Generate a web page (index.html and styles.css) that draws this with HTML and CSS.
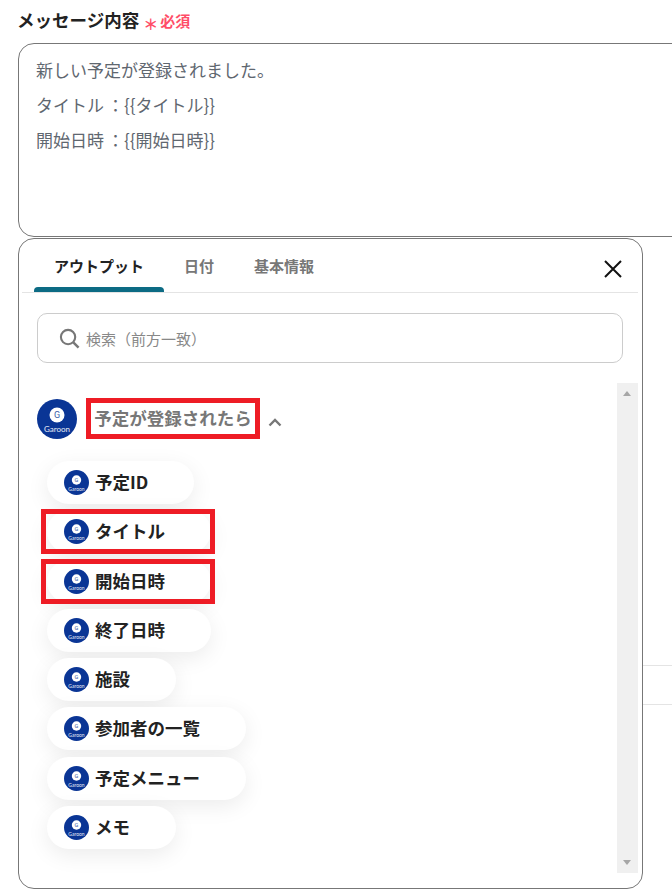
FILE: index.html
```html
<!DOCTYPE html>
<html lang="ja">
<head>
<meta charset="utf-8">
<title>メッセージ内容</title>
<link rel="stylesheet" href="styles.css">
</head>
<body>
<main class="page">
  <div class="field-label">
    <span class="label-text">メッセージ内容</span>
    <span class="asterisk">＊</span>
    <span class="required">必須</span>
  </div>
  <div class="message">
    <p>新しい予定が登録されました。</p>
    <p>タイトル<span class="colon">：</span>{{タイトル}}</p>
    <p>開始日時<span class="colon">：</span>{{開始日時}}</p>
  </div>
  <div class="behind">
    <div class="behind-row"></div>
  </div>

  <section class="panel">
    <header class="tabs">
      <div class="tab tab-active">アウトプット</div>
      <div class="tab tab-date">日付</div>
      <div class="tab tab-info">基本情報</div>
      <svg class="close" width="18" height="18" viewBox="0 0 18 18"><path d="M1 1 17 17M17 1 1 17" stroke="#111" stroke-width="2" fill="none"/></svg>
    </header>
    <div class="search">
      <svg class="search-icon" width="21" height="21" viewBox="0 0 22 22"><circle cx="9.5" cy="9.5" r="7.5" stroke="#777" stroke-width="2.2" fill="none"/><path d="M15 15 20.5 20.5" stroke="#777" stroke-width="2.6" fill="none"/></svg>
      <span class="search-text">検索（前方一致）</span>
    </div>
    <div class="scroll-area">
      <div class="list">
        <div class="group-head">
          <svg class="group-logo" viewBox="0 0 40 40"><circle cx="20" cy="20" r="20" class="lg-bg"/><circle cx="20" cy="16" r="7.5" class="lg-dot"/><text x="20" y="19.2" class="lg-g">G</text><text x="20" y="33" class="lg-name">Garoon</text></svg>
          <div class="group-title">予定が登録されたら</div>
          <svg class="chevron" width="14" height="9" viewBox="0 0 14 9"><path d="M1.5 7.5 7 2l5.5 5.5" stroke="#777" stroke-width="2.4" fill="none"/></svg>
        </div>
        <ul class="chips">
          <li class="chip"><svg class="chip-logo" viewBox="0 0 40 40"><circle cx="20" cy="20" r="20" class="lg-bg"/><circle cx="20" cy="16" r="7.5" class="lg-dot"/><text x="20" y="19.2" class="lg-g">G</text><text x="20" y="33" class="lg-name">Garoon</text></svg>予定ID</li>
          <li class="chip marked"><svg class="chip-logo" viewBox="0 0 40 40"><circle cx="20" cy="20" r="20" class="lg-bg"/><circle cx="20" cy="16" r="7.5" class="lg-dot"/><text x="20" y="19.2" class="lg-g">G</text><text x="20" y="33" class="lg-name">Garoon</text></svg>タイトル</li>
          <li class="chip marked"><svg class="chip-logo" viewBox="0 0 40 40"><circle cx="20" cy="20" r="20" class="lg-bg"/><circle cx="20" cy="16" r="7.5" class="lg-dot"/><text x="20" y="19.2" class="lg-g">G</text><text x="20" y="33" class="lg-name">Garoon</text></svg>開始日時</li>
          <li class="chip"><svg class="chip-logo" viewBox="0 0 40 40"><circle cx="20" cy="20" r="20" class="lg-bg"/><circle cx="20" cy="16" r="7.5" class="lg-dot"/><text x="20" y="19.2" class="lg-g">G</text><text x="20" y="33" class="lg-name">Garoon</text></svg>終了日時</li>
          <li class="chip"><svg class="chip-logo" viewBox="0 0 40 40"><circle cx="20" cy="20" r="20" class="lg-bg"/><circle cx="20" cy="16" r="7.5" class="lg-dot"/><text x="20" y="19.2" class="lg-g">G</text><text x="20" y="33" class="lg-name">Garoon</text></svg>施設</li>
          <li class="chip"><svg class="chip-logo" viewBox="0 0 40 40"><circle cx="20" cy="20" r="20" class="lg-bg"/><circle cx="20" cy="16" r="7.5" class="lg-dot"/><text x="20" y="19.2" class="lg-g">G</text><text x="20" y="33" class="lg-name">Garoon</text></svg>参加者の一覧</li>
          <li class="chip"><svg class="chip-logo" viewBox="0 0 40 40"><circle cx="20" cy="20" r="20" class="lg-bg"/><circle cx="20" cy="16" r="7.5" class="lg-dot"/><text x="20" y="19.2" class="lg-g">G</text><text x="20" y="33" class="lg-name">Garoon</text></svg>予定メニュー</li>
          <li class="chip"><svg class="chip-logo" viewBox="0 0 40 40"><circle cx="20" cy="20" r="20" class="lg-bg"/><circle cx="20" cy="16" r="7.5" class="lg-dot"/><text x="20" y="19.2" class="lg-g">G</text><text x="20" y="33" class="lg-name">Garoon</text></svg>メモ</li>
        </ul>
      </div>
      <div class="scrollbar">
        <span class="arrow arrow-up"></span>
        <span class="arrow arrow-down"></span>
      </div>
    </div>
  </section>
</main>
</body>
</html>
```
FILE: styles.css
```css
* { box-sizing: border-box; }
html, body { margin: 0; padding: 0; }
body {
  background: #fff;
  font-family: "Noto Sans CJK JP", "Noto Sans", sans-serif;
  color: #222;
  overflow: hidden;
}
.lg-bg { fill: #0a3595; }
.lg-dot { fill: #fff; }
.lg-g {
  font-family: Roboto, sans-serif;
  font-size: 9px;
  font-weight: 400;
  text-anchor: middle;
  fill: #3a5caa;
}
.lg-name {
  font-family: Lato, sans-serif;
  font-size: 8px;
  font-weight: 400;
  text-anchor: middle;
  fill: #e8ecf6;
}
.page {
  position: relative;
  width: 672px;
  height: 893px;
  overflow: hidden;
  padding: 8px 0 0 18px;
}
.field-label {
  display: flex;
  align-items: flex-start;
  height: 24px;
}
.label-text {
  margin-left: -1px;
  font-size: 17.5px;
  font-weight: 700;
  line-height: 23px;
  color: #222;
}
.asterisk {
  margin: 7px 0 0 4px;
  font-size: 15px;
  line-height: 18px;
  font-weight: 700;
  color: #ff4d67;
}
.required {
  margin-left: 2px;
  font-size: 15px;
  font-weight: 700;
  line-height: 25px;
  color: #ff4d67;
}
.message {
  margin-top: 11px;
  width: 700px;
  height: 194px;
  border: 1px solid #777;
  border-radius: 16px;
  padding: 8px 17px;
  font-size: 17px;
  color: #5f6770;
}
.message p {
  margin: 0;
  height: 35px;
  line-height: 35px;
}
.colon { margin-left: 3px; }
.behind { margin-top: 428px; margin-left: 625px; }
.behind-row {
  height: 40px;
  border-top: 1px solid #e4e4e4;
  border-bottom: 1px solid #e4e4e4;
}
.panel {
  position: absolute;
  left: 18px;
  top: 238px;
  width: 625px;
  height: 651px;
  background: #fff;
  border: 1px solid #777;
  border-radius: 16px;
  padding-left: 3px;
}
.tabs {
  position: relative;
  display: flex;
  width: 616px;
  height: 54px;
  padding-left: 12px;
  border-bottom: 1px solid #e4e4e4;
}
.tab {
  height: 53px;
  padding-top: 13px;
  text-align: center;
  font-size: 15px;
  font-weight: 700;
  line-height: 28px;
  color: #777;
}
.tab-active {
  position: relative;
  width: 130px;
  color: #222;
}
.tab-active::after {
  content: "";
  position: absolute;
  left: 0;
  right: 0;
  bottom: 0;
  height: 5px;
  background: #0c6b84;
  border-radius: 4px 4px 0 0;
}
.tab-date { width: 70px; }
.tab-info { width: 90px; margin-left: 5px; }
.close {
  position: absolute;
  right: 16px;
  top: 21px;
}
.search {
  display: flex;
  align-items: center;
  width: 586px;
  height: 50px;
  margin: 20px 0 0 15px;
  padding-left: 21px;
  border: 1px solid #ccc;
  border-radius: 10px;
}
.search-icon { flex: none; }
.search-text {
  margin-left: 6px;
  font-size: 15px;
  color: #888;
}
.scroll-area {
  display: flex;
  margin-top: 20px;
  height: 490px;
}
.list {
  width: 595px;
  padding: 16px 0 0 15px;
}
.group-head {
  display: flex;
  align-items: center;
  height: 40px;
}
.group-logo {
  width: 40px;
  height: 40px;
  flex: none;
}
.group-title {
  margin: -1px 0 0 9px;
  width: 174px;
  height: 41px;
  border: 5px solid #ee1c25;
  font-size: 17.5px;
  font-weight: 700;
  line-height: 29px;
  text-align: center;
  white-space: nowrap;
  color: #777;
}
.chevron { margin: 6px 0 0 8px; }
.chips {
  list-style: none;
  margin: 22px 0 0 10px;
  padding: 0;
  display: flex;
  flex-direction: column;
  align-items: flex-start;
  gap: 6.3px;
}
.chip {
  position: relative;
  display: flex;
  align-items: center;
  height: 43px;
  padding: 0 46px 2px 17px;
  background: #fff;
  border-radius: 22px;
  box-shadow: 0 6px 22px rgba(0, 0, 0, .08);
  font-size: 17.5px;
  font-weight: 700;
  color: #222;
  white-space: nowrap;
}
.chip-logo {
  width: 25px;
  height: 25px;
  margin: 2px 6px 0 0;
  flex: none;
}
.marked::after {
  content: "";
  position: absolute;
  left: -6px;
  right: -4px;
  top: -1px;
  bottom: -1px;
  border: 5px solid #ee1c25;
}
.scrollbar {
  position: relative;
  width: 21px;
  height: 490px;
  background: #f0f0f0;
}
.arrow {
  position: absolute;
  left: 6px;
  width: 0;
  height: 0;
  border-left: 4.5px solid transparent;
  border-right: 4.5px solid transparent;
}
.arrow-up { top: 8px; border-bottom: 5px solid #a6a6a6; }
.arrow-down { bottom: 8px; border-top: 5px solid #a6a6a6; }
```
